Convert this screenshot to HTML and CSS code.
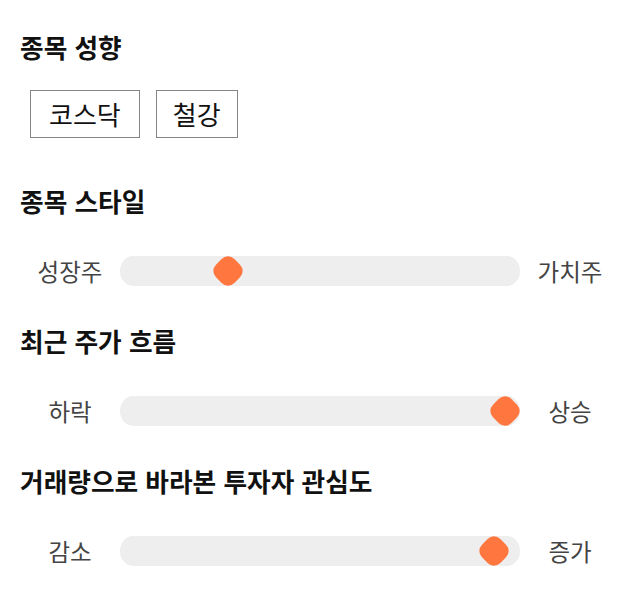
FILE: index.html
```html
<!DOCTYPE html>
<html lang="ko">
<head>
<meta charset="utf-8">
<title>종목 성향</title>
<link rel="stylesheet" href="styles.css">
</head>
<body>
<main class="page">
  <section class="section section--chips">
    <h2 class="title">종목 성향</h2>
    <div class="chips">
      <button class="chip">코스닥</button>
      <button class="chip">철강</button>
    </div>
  </section>

  <section class="section">
    <h2 class="title">종목 스타일</h2>
    <div class="slider">
      <span class="slider__label">성장주</span>
      <div class="slider__track"><span class="slider__thumb" style="left:108px"></span></div>
      <span class="slider__label">가치주</span>
    </div>
  </section>

  <section class="section">
    <h2 class="title">최근 주가 흐름</h2>
    <div class="slider">
      <span class="slider__label">하락</span>
      <div class="slider__track"><span class="slider__thumb" style="left:385px"></span></div>
      <span class="slider__label">상승</span>
    </div>
  </section>

  <section class="section">
    <h2 class="title">거래량으로 바라본 투자자 관심도</h2>
    <div class="slider">
      <span class="slider__label">감소</span>
      <div class="slider__track"><span class="slider__thumb" style="left:374px"></span></div>
      <span class="slider__label">증가</span>
    </div>
  </section>
</main>
</body>
</html>
```

FILE: styles.css
```css
* { box-sizing: border-box; }

html, body {
  margin: 0;
  padding: 0;
  background: #ffffff;
}

body {
  font-family: "Noto Sans CJK KR", "Noto Sans", sans-serif;
  color: #111111;
}

.page {
  width: 640px;
  padding: 30px 20px 0;
  display: flex;
  flex-direction: column;
}

.section {
  display: flex;
  flex-direction: column;
  margin-bottom: 38px;
}

.title {
  margin: 0 0 38px 0;
  font-size: 25.7px;
  line-height: 34px;
  font-weight: 700;
  color: #111111;
}

.section--chips {
  margin-bottom: 46px;
}

.section--chips .title {
  margin-bottom: 26px;
}

.chips {
  display: flex;
  gap: 16px;
  padding-left: 10px;
}

.chip {
  font-family: inherit;
  font-size: 26px;
  line-height: 26px;
  padding: 10px 18px;
  border: 1px solid #858585;
  background: #ffffff;
  color: #111111;
  border-radius: 0;
}

.chip + .chip {
  padding: 10px 16px;
}

.slider {
  display: grid;
  grid-template-columns: 100px 400px 100px;
  align-items: center;
  height: 30px;
}

.slider__label {
  text-align: center;
  font-size: 23.5px;
  line-height: 30px;
  color: #444444;
}

.slider__track {
  position: relative;
  height: 30px;
  background: #eeeeee;
  border-radius: 13px / 15px;
}

.slider__thumb {
  position: absolute;
  top: 50%;
  width: 26px;
  height: 26px;
  background: #ff763f;
  border-radius: 9px;
  transform: translate(-50%, -50%) rotate(45deg);
}
```
